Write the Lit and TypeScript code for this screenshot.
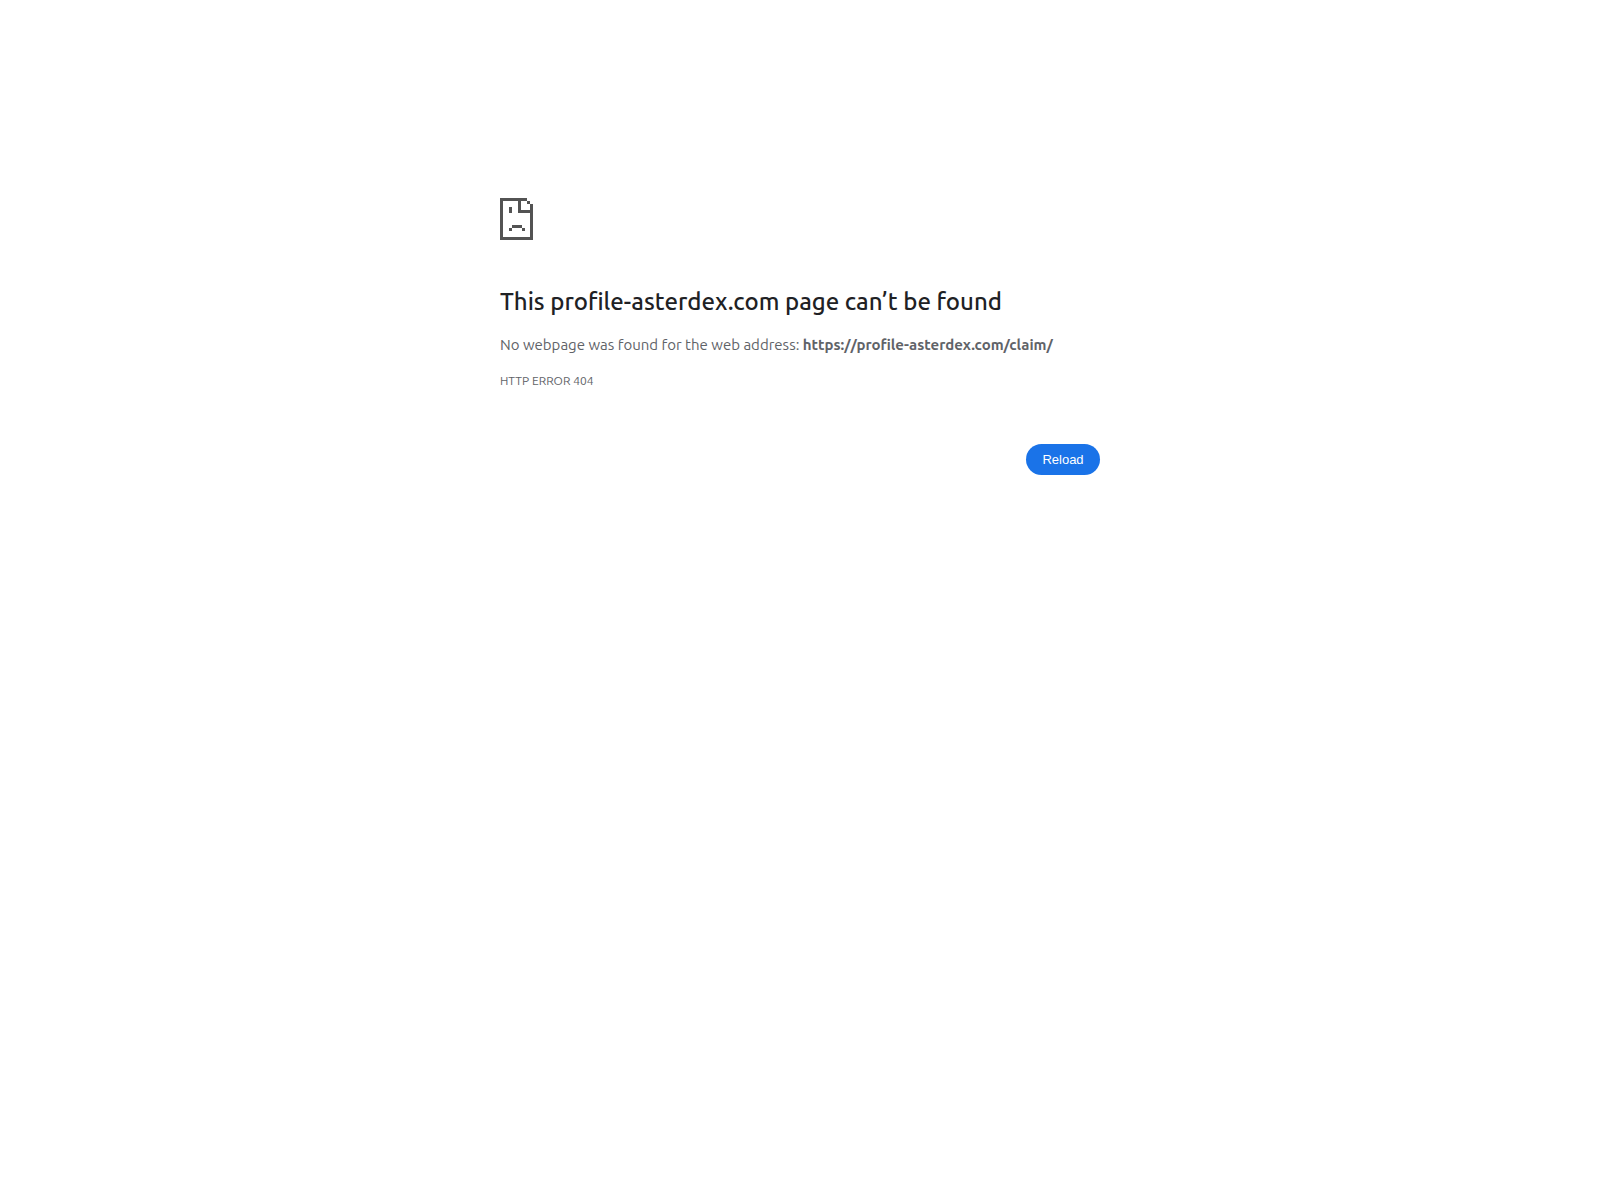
import { LitElement, html, css } from "lit";
import { customElement, property } from "lit/decorators.js";

@customElement("sad-page-icon")
class SadPageIcon extends LitElement {
  static styles = css`
    :host { display: block; }
    .icon { display: block; width: 33px; height: 42px; fill: #535353; }
  `;

  render() {
    return html`
      <svg class="icon" viewBox="0 0 33 42" shape-rendering="crispEdges" aria-hidden="true">
        <path d="M0 0H27V3H3V39H30V15H18V3H21V12H30V6H33V42H0Z" />
        <path d="M27 3H30V6H27Z" />
        <path d="M9 9H12V15H9Z" />
        <path d="M12 27H22V30H12ZM9 30H12V33H9ZM22 30H25V33H22Z" />
      </svg>
    `;
  }
}

@customElement("app-root")
class AppRoot extends LitElement {
  static styles = css`
    :host {
      display: block;
      min-height: 100vh;
      box-sizing: border-box;
      padding: 198px 24px 0;
      background: #fff;
      color: #5f6368;
      font-family: Ubuntu, "Noto Sans", sans-serif;
      font-size: 15px;
      line-height: 24px;
    }
    .content { max-width: 600px; margin: 0 auto; }
    .title {
      margin: 47px 0 16px;
      color: #202124;
      font-size: 24px;
      font-weight: 500;
      line-height: 30px;
    }
    .summary { margin: 0; }
    .address { font-weight: 700; }
    .code { margin-top: 12px; font-size: 12px; text-transform: uppercase; }
    .actions { display: flex; justify-content: flex-end; margin-top: 51px; }
    .reload {
      min-width: 74px;
      border: 0;
      border-radius: 20px;
      padding: 8px 16px;
      background: #1a73e8;
      color: #fff;
      font: 13px/15px "Liberation Sans", Arial, sans-serif;
      cursor: pointer;
    }
  `;

  @property() host = "profile-asterdex.com";
  @property() path = "/claim/";

  private reload() {
    window.location.reload();
  }

  render() {
    return html`
      <main class="content">
        <sad-page-icon></sad-page-icon>
        <h1 class="title">This ${this.host} page can’t be found</h1>
        <p class="summary">No webpage was found for the web address: <strong class="address">https://${this.host}${this.path}</strong></p>
        <div class="code">HTTP ERROR 404</div>
        <div class="actions">
          <button class="reload" type="button" @click=${this.reload}>Reload</button>
        </div>
      </main>
    `;
  }
}
